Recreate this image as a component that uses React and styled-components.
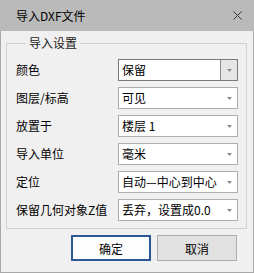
import React from "react";
import styled, { createGlobalStyle } from "styled-components";

const GlobalStyle = createGlobalStyle`
  html, body {
    margin: 0;
    padding: 0;
    background: #f0f0f0;
  }
  * {
    box-sizing: border-box;
  }
`;

const FONT = `"Noto Sans CJK SC", "Noto Sans", sans-serif`;

const Window = styled.div`
  width: 254px;
  height: 273px;
  display: flex;
  flex-direction: column;
  font-family: ${FONT};
  font-size: 12px;
  color: #000;
`;

const TitleBar = styled.div`
  height: 31px;
  flex: none;
  background: #bababa;
  display: flex;
  align-items: center;
  justify-content: space-between;
  padding: 0 12px 0 16px;
  font-size: 12px;
  line-height: 14px;
  color: #000;
`;

const Close = styled.button`
  width: 9px;
  height: 9px;
  padding: 0;
  border: none;
  background: none;
  display: flex;
  margin-top: -1px;
`;

const Body = styled.div`
  flex: 1;
  background: #f0f0f0;
  border: 1px solid #a9a9a9;
  border-top: none;
  padding: 4px 6px 0 5px;
  display: flex;
  flex-direction: column;
`;

const Group = styled.fieldset`
  margin: 0;
  border: 1px solid #d3d3d3;
  padding: 0 8px 7px 9px;
  display: grid;
  grid-template-columns: 102px 120px;
  row-gap: 6px;
  align-items: center;
`;

const Legend = styled.legend`
  margin-left: 10px;
  padding: 0 3px;
  line-height: 16px;
  height: 16px;
  color: #1a1a1a;
  margin-bottom: 8px;
`;

const Label = styled.div`
  line-height: 14px;
`;

const Combo = styled.div`
  height: 22px;
  display: flex;
  align-items: stretch;
  background: #fff;
  border: 1px solid ${(p) => (p.active ? "#7a7a7a" : "#adadad")};
`;

const ComboText = styled.div`
  flex: 1;
  padding-left: 3px;
  display: flex;
  align-items: center;
  line-height: 14px;
  white-space: nowrap;
  overflow: hidden;
`;

const ArrowBox = styled.div`
  width: 17px;
  flex: none;
  display: flex;
  align-items: center;
  justify-content: center;
  background: ${(p) => (p.active ? "#e5e5e5" : "transparent")};
  border-left: 1px solid ${(p) => (p.active ? "#8a8a8a" : "transparent")};
`;

const Buttons = styled.div`
  display: flex;
  justify-content: flex-end;
  gap: 6px;
  margin-top: 6px;
  margin-right: 10px;
`;

const Button = styled.button`
  width: 80px;
  height: 26px;
  font-family: ${FONT};
  font-size: 12px;
  color: #000;
  padding: 0;
  background: ${(p) => (p.primary ? "#fdfdfd" : "#e1e1e1")};
  border: 1px solid ${(p) => (p.primary ? "#2b5797" : "#adadad")};
  box-shadow: ${(p) => (p.primary ? "inset 0 0 0 1px #2b5797" : "none")};
`;

const Arrow = () => (
  <svg width="5" height="3" viewBox="0 0 5 3">
    <polygon points="0,0 5,0 2.5,3" fill="#8c8c8c" />
  </svg>
);

const rows = [
  ["颜色", "保留", true],
  ["图层/标高", "可见"],
  ["放置于", "楼层 1"],
  ["导入单位", "毫米"],
  ["定位", "自动—中心到中心"],
  ["保留几何对象Z值", "丢弃，设置成0.0"],
];

export default function App() {
  return (
    <>
      <GlobalStyle />
      <Window>
        <TitleBar>
          <span>导入DXF文件</span>
          <Close aria-label="close">
            <svg width="9" height="9" viewBox="0 0 9 9">
              <path d="M0.5 0.5 L8.5 8.5 M8.5 0.5 L0.5 8.5" stroke="#333" strokeWidth="1" />
            </svg>
          </Close>
        </TitleBar>
        <Body>
          <Group>
            <Legend>导入设置</Legend>
            {rows.map(([label, value, active]) => (
              <React.Fragment key={label}>
                <Label>{label}</Label>
                <Combo active={active}>
                  <ComboText>{value}</ComboText>
                  <ArrowBox active={active}>
                    <Arrow />
                  </ArrowBox>
                </Combo>
              </React.Fragment>
            ))}
          </Group>
          <Buttons>
            <Button primary>确定</Button>
            <Button>取消</Button>
          </Buttons>
        </Body>
      </Window>
    </>
  );
}
